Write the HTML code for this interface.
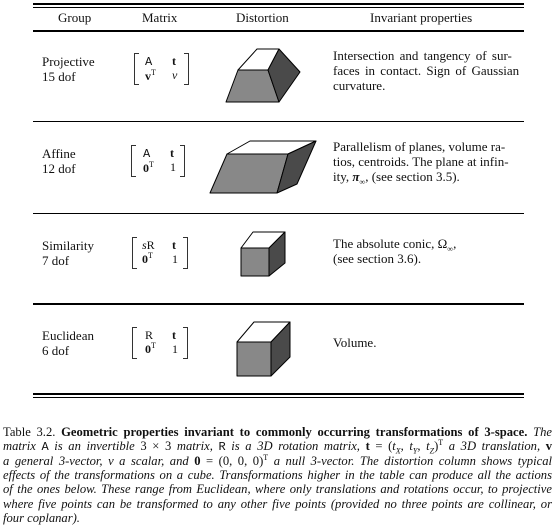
<!DOCTYPE html>
<html><head><meta charset="utf-8"><style>
body{margin:0;width:557px;height:527px;background:#fff;position:relative;font-family:"Liberation Serif",serif;color:#111;overflow:hidden}
sup,sub{line-height:0;font-size:8px}
.t{position:absolute;font-size:13px;line-height:15px;white-space:nowrap}
.l{position:absolute;left:33px;width:491px;background:#000}
.m{position:absolute;font-size:12px;line-height:14px}
.br{position:absolute;width:4px;border:1px solid #333}
.c{position:absolute;left:3px;width:549px;font-size:12.6px;line-height:14px;font-style:italic;text-align:justify;text-align-last:justify;white-space:nowrap}
.n{font-style:normal}
.mono{font-family:"Liberation Mono",monospace;font-style:normal;font-size:12px}
</style></head><body>
<div class="l" style="top:3px;height:2px"></div>
<div class="l" style="top:7px;height:1px"></div>
<div class="l" style="top:30px;height:2px"></div>
<div class="l" style="top:121px;height:1px"></div>
<div class="l" style="top:213px;height:1px"></div>
<div class="l" style="top:303px;height:2px"></div>
<div class="l" style="top:393px;height:2px"></div>
<div class="l" style="top:397px;height:1px"></div>

<div class="t" style="left:58px;top:10px">Group</div>
<div class="t" style="left:142px;top:10px">Matrix</div>
<div class="t" style="left:236px;top:10px">Distortion</div>
<div class="t" style="left:370px;top:10px">Invariant properties</div>

<div class="t" style="left:42px;top:54px">Projective<br>15 dof</div>
<div class="t" style="left:42px;top:146px">Affine<br>12 dof</div>
<div class="t" style="left:42px;top:238px">Similarity<br>7 dof</div>
<div class="t" style="left:42px;top:328px">Euclidean<br>6 dof</div>

<div class="br" style="left:134px;top:53px;height:30px;border-right:none"></div>
<div class="br" style="left:184px;top:53px;height:30px;border-left:none"></div>
<div class="m" style="left:145px;top:54px"><span class="mono">A</span><br><b>v</b><sup>T</sup></div>
<div class="m" style="left:172px;top:54px"><b>t</b><br><i>v</i></div>

<div class="br" style="left:131px;top:145px;height:30px;border-right:none"></div>
<div class="br" style="left:180px;top:145px;height:30px;border-left:none"></div>
<div class="m" style="left:143px;top:146px"><span class="mono">A</span><br><b>0</b><sup>T</sup></div>
<div class="m" style="left:170px;top:146px"><b>t</b><br>1</div>

<div class="br" style="left:132px;top:237px;height:30px;border-right:none"></div>
<div class="br" style="left:183px;top:237px;height:30px;border-left:none"></div>
<div class="m" style="left:142px;top:238px"><i>s</i>R<br><b>0</b><sup>T</sup></div>
<div class="m" style="left:172px;top:238px"><b>t</b><br>1</div>

<div class="br" style="left:132px;top:327px;height:30px;border-right:none"></div>
<div class="br" style="left:183px;top:327px;height:30px;border-left:none"></div>
<div class="m" style="left:145px;top:328px">R<br><b>0</b><sup>T</sup></div>
<div class="m" style="left:172px;top:328px"><b>t</b><br>1</div>

<svg width="557" height="400" style="position:absolute;left:0;top:0" stroke="#000" stroke-width="1" stroke-linejoin="round">
<polygon points="238,70 257,49 279,49 268,70" fill="#fff"/>
<polygon points="238,70 268,70 279,102 226,102" fill="#888"/>
<polygon points="279,49 300,72 279,102 268,70" fill="#4a4a4a"/>
<polygon points="227,154 250,141 316,141 288,154" fill="#fff"/>
<polygon points="227,154 288,154 277,193 210,193" fill="#888"/>
<polygon points="288,154 316,141 297,184 277,193" fill="#4a4a4a"/>
<polygon points="241,248 253,232 285,232 269,248" fill="#fff"/>
<polygon points="241,248 269,248 269,276 241,276" fill="#888"/>
<polygon points="269,248 285,232 285,263 269,276" fill="#4a4a4a"/>
<polygon points="237,342 254,322 290,322 271,342" fill="#fff"/>
<polygon points="237,342 271,342 271,376 237,376" fill="#888"/>
<polygon points="271,342 290,322 290,357 271,376" fill="#4a4a4a"/>
</svg>

<div class="t" style="left:333px;top:48px;word-spacing:2px">Intersection and tangency of sur-<br>faces in contact. Sign of Gaussian<br>curvature.</div>
<div class="t" style="left:333px;top:139px">Parallelism of planes, volume ra-<br>tios, centroids. The plane at infin-<br>ity, <i><b>π</b></i><sub>∞</sub>, (see section 3.5).</div>
<div class="t" style="left:333px;top:236px">The absolute conic, Ω<sub>∞</sub>,<br>(see section 3.6).</div>
<div class="t" style="left:333px;top:335px">Volume.</div>

<div class="c" style="top:425px"><span class="n">Table 3.2. </span><b class="n">Geometric properties invariant to commonly occurring transformations of 3-space.</b> The</div>
<div class="c" style="top:439px">matrix <span class="mono">A</span> is an invertible <span class="n">3 × 3</span> matrix, <span class="mono">R</span> is a 3D rotation matrix, <b class="n">t</b> <span class="n">= (</span>t<sub>X</sub>, t<sub>Y</sub>, t<sub>Z</sub><span class="n">)<sup>T</sup></span> a 3D translation, <b class="n">v</b></div>
<div class="c" style="top:454px">a general 3-vector, <i>v</i> a scalar, and <b class="n">0</b> <span class="n">= (0, 0, 0)<sup>T</sup></span> a null 3-vector. The distortion column shows typical</div>
<div class="c" style="top:468px">effects of the transformations on a cube. Transformations higher in the table can produce all the actions</div>
<div class="c" style="top:482px">of the ones below. These range from Euclidean, where only translations and rotations occur, to projective</div>
<div class="c" style="top:497px">where five points can be transformed to any other five points (provided no three points are collinear, or</div>
<div class="c" style="top:511px;text-align-last:left">four coplanar).</div>
</body></html>
